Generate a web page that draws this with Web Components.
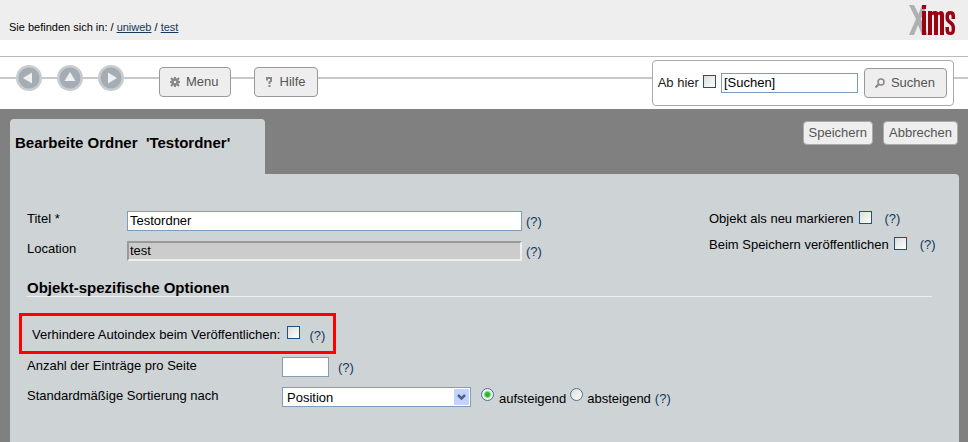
<!DOCTYPE html>
<html lang="de">
<head>
<meta charset="utf-8">
<title>XIMS – Bearbeite Ordner</title>
<style>
  html, body { height: 100%; }
  body { margin: 0; background: #808080; color: #000; font: 13px/20px "Liberation Sans", Arial, sans-serif; }
</style>
</head>
<body>
<xims-app></xims-app>
<script>
const define = (name, html, setup) => {
  const tpl = document.createElement('template');
  tpl.innerHTML = html;
  customElements.define(name, class extends HTMLElement {
    constructor() {
      super();
      this.attachShadow({ mode: 'open' }).append(tpl.content.cloneNode(true));
    }
    connectedCallback() { if (setup) setup(this, this.shadowRoot); }
  });
};

define('xims-logo', `
<style>:host { display: block; line-height: 0; }</style>
<svg width="48" height="32" viewBox="0 0 48 32" role="img" aria-label="Xims">
  <path fill="#aeb0b3" d="M1 1h5l4.500 9L14 1h5l-6 14 7 16h-6l-4-10-4 10H1l7-16z"/>
  <g fill="#990412">
    <path d="M14 1h4v4h-4zM14 7h4v24h-4z"/>
    <path d="M20 31V7h4v1q1.500-1.500 4-1 1.500.3 2 1.500Q31.500 7 33 7q3 .3 3 4v20h-4V12q0-1.600-1-1.600T30 12v19h-4V12q0-1.600-1-1.600T24 12v19z"/>
    <path d="M47 15h-3.500v-2.700q0-1.800-1.200-1.800T41 12.300v1.500q0 1.400 1.300 2.400l2.500 2.100Q47 20.300 47 22.600V26q0 5-4.800 5T37.500 26v-3H41v3q0 2 1.300 2t1.300-2v-2.500q0-1.400-1.200-2.400L40 19q-2.500-2-2.500-4.600V12q0-5 4.800-5T47 12z"/>
  </g>
</svg>`);

define('xims-header', `
<style>
  :host { display: flex; justify-content: space-between; height: 40px; box-sizing: border-box; padding: 4px 12px 0 9px; background: #eee; font-size: 11px; }
  nav { padding-top: 13px; }
  a { color: #14395c; }
</style>
<nav aria-label="Pfad">Sie befinden sich in: / <a href="#uniweb">uniweb</a> / <a href="#test">test</a></nav>
<xims-logo></xims-logo>`);

define('xims-arrow', `
<style>
  :host { display: block; }
  button { display: block; width: 26px; height: 26px; padding: 0; border: 0; background: none; }
  svg { display: block; }
</style>
<button><svg width="26" height="26" viewBox="0 0 26 26"><circle cx="13" cy="13" r="13" fill="#c6ccd0"/><circle cx="13" cy="13" r="10.500" fill="#a5adb4"/><path d="M7 13l9-5.500v11z" fill="#eef0f1"/></svg></button>`,
(host, root) => {
  root.querySelector('button').setAttribute('aria-label', host.getAttribute('label'));
  root.querySelector('path').setAttribute('transform', `rotate(${host.getAttribute('turn') || 0} 13 13)`);
});

define('xims-button', `
<style>
  :host { display: block; }
  button { display: flex; align-items: center; gap: 6px; height: 30px; padding: 0 11px 0 10px; border: 1px solid #999; border-radius: 4px; background: #eee; color: #555; font: 13px/20px "Liberation Sans", Arial, sans-serif; }
  :host([small]) button { height: 24px; padding: 0 5px; border-color: #aaa; }
</style>
<button type="button"><slot name="icon"></slot><slot></slot></button>`);

define('xims-check', `
<style>
  :host { display: block; }
  input { appearance: none; display: block; box-sizing: border-box; width: 13px; height: 13px; margin: 0; border: 1px solid #1c5180; background: linear-gradient(135deg, #dcdcd7, #fff); }
  input[type=radio] { border-radius: 50%; border-color: #4a7396; }
  input[type=radio]:checked { background: radial-gradient(circle, #2eb82e 0 2px, #eef3ee 4px); }
</style>
<input type="checkbox">`,
(host, root) => {
  const input = root.querySelector('input');
  if (host.hasAttribute('radio')) input.type = 'radio';
  input.checked = host.hasAttribute('checked');
  input.setAttribute('aria-label', host.getAttribute('label'));
});

define('xims-help', `
<style>:host { display: block; } a { color: #14395c; text-decoration: none; }</style>
<a href="#hilfe" aria-label="Hilfe">(?)</a>`);

define('xims-toolbar', `
<style>
  :host { display: block; padding-top: 16px; background: #fff; }
  .bar { display: flex; align-items: flex-start; height: 53px; box-sizing: border-box; padding: 3px 14px 0 16px; border-top: 1px solid #bbb;
    background: linear-gradient(#c8c8c8, #c8c8c8) 0 20px / 100% 2px no-repeat; }
  .arrows { display: flex; gap: 15px; padding: 5px 35px 0 0; }
  .buttons { display: flex; gap: 23px; padding-top: 7px; flex: 1; }
  form { display: flex; align-items: center; height: 46px; box-sizing: border-box; padding: 0 6px 0 5px; border: 1px solid #aaa; border-radius: 4px; background: #fff; color: #222; }
  xims-check { margin: 0 5px 0 4px; padding-bottom: 3px; }
  input { width: 137px; height: 20px; box-sizing: border-box; margin-right: 6px; padding: 0 2px; border: 1px solid #7f9db9; font: inherit; }
</style>
<div class="bar">
  <div class="arrows">
    <xims-arrow label="Zurück"></xims-arrow>
    <xims-arrow label="Nach oben" turn="90"></xims-arrow>
    <xims-arrow label="Vor" turn="180"></xims-arrow>
  </div>
  <div class="buttons">
    <xims-button><svg slot="icon" width="10" height="10" viewBox="0 0 10 10"><path fill="none" stroke="#888" stroke-width="2" d="M5 0v2M5 8v2M0 5h2M8 5h2M1 1l2 2M7 7l2 2M9 1L7 3M3 7L1 9"/><circle cx="5" cy="5" r="2.500" fill="none" stroke="#888" stroke-width="2.500"/></svg>Menu</xims-button>
    <xims-button><svg slot="icon" width="9" height="10" viewBox="0 0 9 10"><path fill="none" stroke="#888" stroke-width="2" d="M2 3.500V1h4v3L4.500 5v2M4.500 8v2"/></svg>Hilfe</xims-button>
  </div>
  <form>
    <span>Ab hier</span><xims-check label="Ab hier"></xims-check>
    <input type="text" value="[Suchen]" aria-label="Suchen">
    <xims-button><svg slot="icon" width="10" height="10" viewBox="0 0 10 10"><circle cx="6" cy="4" r="3" fill="none" stroke="#888" stroke-width="1.500"/><path stroke="#888" stroke-width="2" d="M4 6L.5 9.500"/></svg>Suchen</xims-button>
  </form>
</div>`);

define('xims-tab', `
<style>
  :host { display: flex; align-items: flex-start; justify-content: space-between; }
  h1 { box-sizing: border-box; width: 255px; height: 55px; margin: 0; padding: 14px 5px 0; border-radius: 4px 4px 0 0; background: #ced3d6; font-size: 15px; line-height: 20px; white-space: pre; }
  .actions { display: flex; gap: 10px; padding-top: 2px; padding-right: 1px; }
</style>
<h1><slot></slot></h1>
<div class="actions"><xims-button small>Speichern</xims-button><xims-button small>Abbrechen</xims-button></div>`);

define('xims-form', `
<style>
  :host { display: block; flex: 1; padding: 35px 27px 0 17px; border-radius: 0 4px 0 0; background: #ced3d6; }
  .top { display: flex; justify-content: space-between; }
  .row { display: flex; height: 30px; }
  .row > label:first-child { flex: none; width: 100px; }
  .text { box-sizing: border-box; width: 395px; height: 20px; padding: 0 2px; border: 1px solid #7f9db9; background: #fff; font: inherit; margin-top: 2px; }
  .text[readonly] { border: 2px solid; border-color: #999 #eee #eee #999; background: #ccc; padding: 0 1px; }
  .row xims-help { padding: 3px 0 0 4px; }
  .flags { width: 223px; }
  .flag { display: flex; height: 26px; white-space: nowrap; }
  .flag xims-check { margin: 2px 13px 0 5px; }
  .flag xims-check, .flag xims-help { flex: none; }
  h2 { margin: 10px 0 16px; border-bottom: 1px solid #eee; font-size: 15px; line-height: 17px; height: 17px; }
  .mark { display: flex; width: fit-content; height: 41px; box-sizing: border-box; margin-left: -8px; padding: 9px 8px 0 10px; border: 3px solid #f00; }
  .mark xims-check { margin: 1px 9px 0 7px; }
  .mark xims-help { padding-top: 1px; }
  .options { display: grid; grid-template-columns: 255px 1fr; grid-auto-rows: 30px; padding-top: 2px; }
  .options .cell { display: flex; }
  .cell .text { width: 47px; margin-top: 1px; }
  .cell xims-help { padding: 2px 0 0 9px; }
  .sort { padding-top: 2px; }
  .sort xims-check { margin: 0 5px 0 10px; }
  .sort xims-check + span + xims-check { margin: 0 4px; }
  .sort xims-help { padding: 1px 0 0 4px; }
  .sort span { padding-top: 1px; }
  .select { display: grid; width: 189px; height: 20px; margin-top: -1px; }
  select, .select svg { grid-area: 1 / 1; }
  select { appearance: none; box-sizing: border-box; width: 100%; height: 20px; padding: 0 4px; border: 1px solid #7f9db9; border-radius: 0; background: #fff; color: #000; font: inherit; }
  .select svg { justify-self: end; align-self: center; margin-right: 2px; pointer-events: none; }
</style>
<div class="top">
  <div>
    <div class="row"><label for="title">Titel *</label><input class="text" id="title" value="Testordner"><xims-help></xims-help></div>
    <div class="row"><label for="loc">Location</label><input class="text" id="loc" value="test" readonly><xims-help></xims-help></div>
  </div>
  <div class="flags">
    <div class="flag"><span>Objekt als neu markieren</span><xims-check label="Objekt als neu markieren"></xims-check><xims-help></xims-help></div>
    <div class="flag"><span>Beim Speichern veröffentlichen</span><xims-check label="Beim Speichern veröffentlichen"></xims-check><xims-help></xims-help></div>
  </div>
</div>
<h2>Objekt-spezifische Optionen</h2>
<div class="mark"><span>Verhindere Autoindex beim Veröffentlichen:</span><xims-check label="Verhindere Autoindex beim Veröffentlichen"></xims-check><xims-help></xims-help></div>
<div class="options">
  <label for="count">Anzahl der Einträge pro Seite</label>
  <div class="cell"><input class="text" id="count"><xims-help></xims-help></div>
  <label for="sort">Standardmäßige Sortierung nach</label>
  <div class="cell sort">
    <div class="select"><select id="sort"><option>Position</option><option>Titel</option></select>
      <svg width="15" height="16" viewBox="0 0 15 16"><rect width="15" height="16" rx="1" fill="#c3d3fd"/><path d="M4 6l3.500 3.500L11 6" fill="none" stroke="#4d6185" stroke-width="2.500"/></svg></div>
    <xims-check radio checked label="aufsteigend"></xims-check><span>aufsteigend</span>
    <xims-check radio label="absteigend"></xims-check><span>absteigend</span>
    <xims-help></xims-help>
  </div>
</div>`);

define('xims-app', `
<style>
  :host { display: flex; flex-direction: column; min-height: 100%; }
  main { display: flex; flex: 1; flex-direction: column; padding: 10px 9px 0 10px; background: #808080; }
</style>
<xims-header></xims-header>
<xims-toolbar></xims-toolbar>
<main>
  <xims-tab>Bearbeite Ordner  'Testordner'</xims-tab>
  <xims-form></xims-form>
</main>`);
</script>
</body>
</html>
